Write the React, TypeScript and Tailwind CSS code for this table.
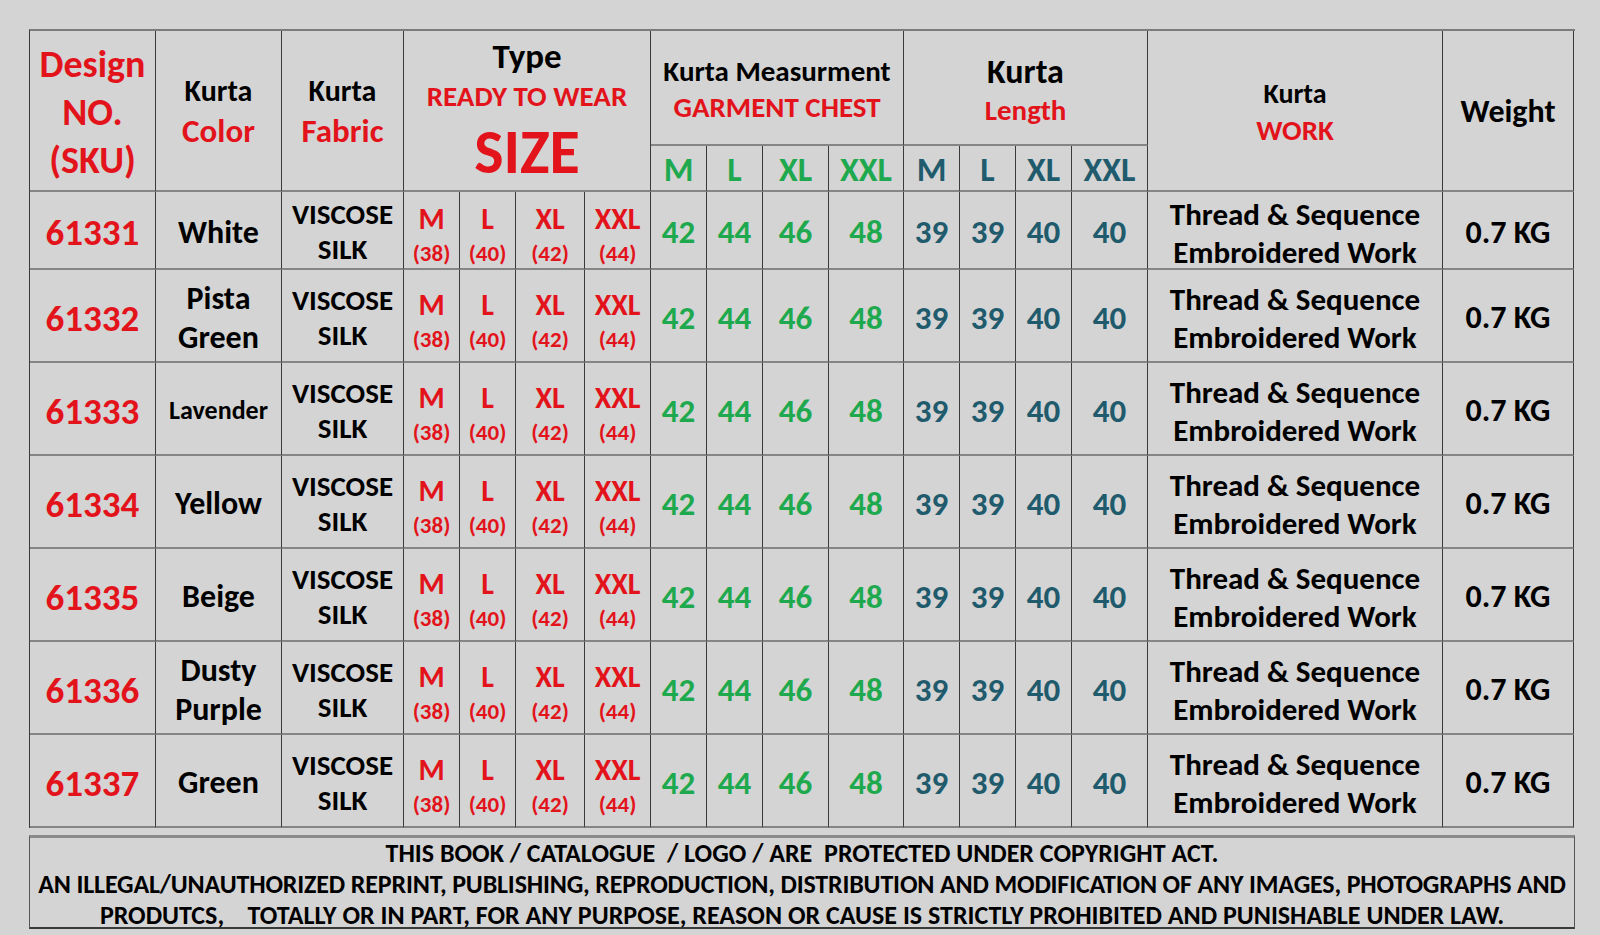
const RED = "text-[#e3131b]";
const GREEN = "text-[#1fa94f]";
const TEAL = "text-[#1f5b6c]";

const cellBase =
  "flex flex-col items-center justify-center text-center border-r border-b-2 border-r-[#3a3a3a] border-b-[#858585]";

type Row = {
  sku: string;
  color: string[];
  small?: boolean;
};

const rows: Row[] = [
  { sku: "61331", color: ["White"] },
  { sku: "61332", color: ["Pista", "Green"] },
  { sku: "61333", color: ["Lavender"], small: true },
  { sku: "61334", color: ["Yellow"] },
  { sku: "61335", color: ["Beige"] },
  { sku: "61336", color: ["Dusty", "Purple"] },
  { sku: "61337", color: ["Green"] },
];

const sizes = [
  { s: "M", n: "(38)" },
  { s: "L", n: "(40)" },
  { s: "XL", n: "(42)" },
  { s: "XXL", n: "(44)" },
];
const subLabels = ["M", "L", "XL", "XXL"];
const chest = ["42", "44", "46", "48"];
const length = ["39", "39", "40", "40"];

export default function App() {
  return (
    <div className="min-h-screen w-full bg-[#d4d4d4] pt-[29px] pl-[29px] font-[Carlito,sans-serif] font-bold text-black">
      <div className="w-[1546px] grid grid-cols-[126px_126px_122px_56px_56px_69px_66px_56px_56px_66px_75px_56px_56px_56px_76px_295px_131px] grid-rows-[115px_46px_78px_93px_93px_93px_93px_93px_93px] border-l border-l-[#3a3a3a] border-t-2 border-t-[#7c7c7c]">
        {/* Header */}
        <div className={`${cellBase} row-span-2 ${RED} text-[38px] leading-[48px] pt-[2px]`}>
          <span>Design</span>
          <span>NO.</span>
          <span>(SKU)</span>
        </div>
        <div className={`${cellBase} row-span-2 leading-[41px]`}>
          <span className="text-[30px]">Kurta</span>
          <span className={`${RED} text-[33px]`}>Color</span>
        </div>
        <div className={`${cellBase} row-span-2 leading-[41px]`}>
          <span className="text-[30px]">Kurta</span>
          <span className={`${RED} text-[33px]`}>Fabric</span>
        </div>
        <div className={`${cellBase} row-span-2 col-span-4 justify-start pt-[7px]`}>
          <span className="text-[35px] leading-[36px]">Type</span>
          <span className={`${RED} text-[29px] leading-[30px] mt-[7px]`}>READY TO WEAR</span>
          <span className={`${RED} text-[62px] leading-[62px] mt-[10px]`}>SIZE</span>
        </div>
        <div className={`${cellBase} col-span-4 text-[29px] leading-[36px] pt-[2px]`}>
          <span>Kurta Measurment</span>
          <span className={RED}>GARMENT CHEST</span>
        </div>
        <div className={`${cellBase} col-span-4 leading-[39px] pt-[6px]`}>
          <span className="text-[34px]">Kurta</span>
          <span className={`${RED} text-[29px]`}>Length</span>
        </div>
        <div className={`${cellBase} row-span-2 leading-[36px] pt-[2px]`}>
          <span className="text-[28px]">Kurta</span>
          <span className={`${RED} text-[29px]`}>WORK</span>
        </div>
        <div className={`${cellBase} row-span-2 text-[32px] leading-none pt-[2px]`}>
          <span>Weight</span>
        </div>
        {subLabels.map((l, i) => (
          <div key={"c" + i} className={`${cellBase} ${GREEN} text-[34px] leading-none pt-[4px]`}>
            {l}
          </div>
        ))}
        {subLabels.map((l, i) => (
          <div key={"l" + i} className={`${cellBase} ${TEAL} text-[34px] leading-none pt-[4px]`}>
            {l}
          </div>
        ))}

        {/* Body */}
        {rows.map((r) => (
          <div key={r.sku} className="contents">
            <div className={`${cellBase} ${RED} text-[37px] leading-none pt-[5px]`}>{r.sku}</div>
            <div
              className={`${cellBase} ${r.small ? "text-[26px]" : "text-[32px]"} leading-[39px] pt-[4px]`}
            >
              {r.color.map((c) => (
                <span key={c}>{c}</span>
              ))}
            </div>
            <div className={`${cellBase} text-[29px] leading-[35px] pt-[4px]`}>
              <span>VISCOSE</span>
              <span>SILK</span>
            </div>
            {sizes.map((s) => (
              <div key={s.s} className={`${cellBase} ${RED} pt-[12px]`}>
                <span className="text-[30px] leading-[34px]">{s.s}</span>
                <span className="text-[23px] leading-[34px]">{s.n}</span>
              </div>
            ))}
            {chest.map((n, i) => (
              <div key={"ch" + i} className={`${cellBase} ${GREEN} text-[33px] leading-none pt-[5px]`}>
                {n}
              </div>
            ))}
            {length.map((n, i) => (
              <div key={"ln" + i} className={`${cellBase} ${TEAL} text-[33px] leading-none pt-[5px]`}>
                {n}
              </div>
            ))}
            <div className={`${cellBase} text-[31px] leading-[38px] pt-[5px]`}>
              <span>Thread &amp; Sequence</span>
              <span>Embroidered Work</span>
            </div>
            <div className={`${cellBase} text-[32px] leading-none pt-[5px]`}>0.7 KG</div>
          </div>
        ))}
      </div>

      {/* Footer */}
      <div className="mt-[7px] w-[1546px] h-[94px] flex flex-col items-center border-t-[3px] border-t-[#8a8a8a] border-b-2 border-b-[#3a3a3a] border-x border-x-[#555] text-[26px] leading-[31px] whitespace-pre">
        <span>THIS BOOK / CATALOGUE  / LOGO / ARE  PROTECTED UNDER COPYRIGHT ACT.</span>
        <span className="tracking-[-0.17px]">AN ILLEGAL/UNAUTHORIZED REPRINT, PUBLISHING, REPRODUCTION, DISTRIBUTION AND MODIFICATION OF ANY IMAGES, PHOTOGRAPHS AND</span>
        <span>PRODUTCS,    TOTALLY OR IN PART, FOR ANY PURPOSE, REASON OR CAUSE IS STRICTLY PROHIBITED AND PUNISHABLE UNDER LAW.</span>
      </div>
    </div>
  );
}
